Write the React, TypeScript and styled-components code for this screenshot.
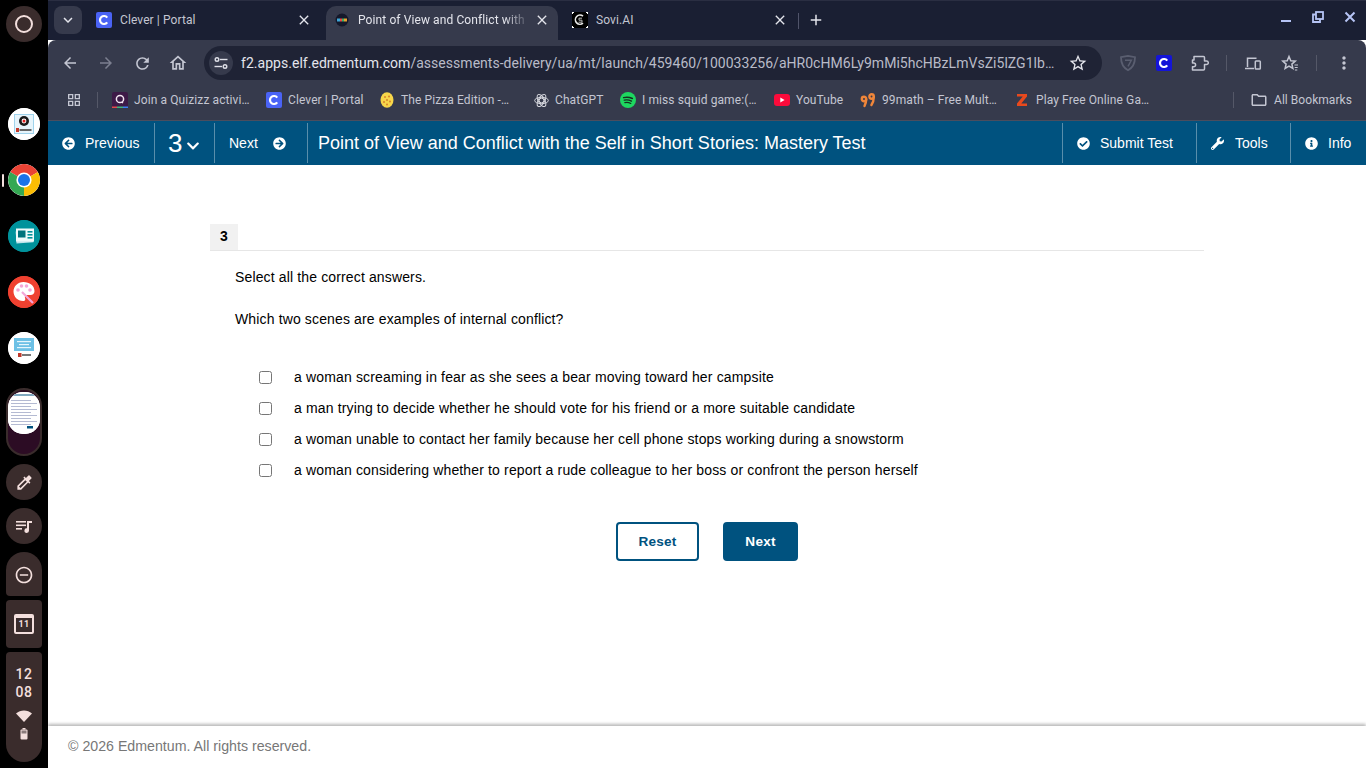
import React from "react";
import styled, { createGlobalStyle } from "styled-components";
import { FaArrowCircleLeft, FaArrowCircleRight, FaCheckCircle, FaWrench, FaInfoCircle, FaChevronDown } from "react-icons/fa";
import {
  MdArrowBack, MdArrowForward, MdRefresh, MdOutlineHome, MdClose, MdAdd, MdMoreVert,
  MdStarBorder, MdOutlineGridView, MdOutlineFolder, MdKeyboardArrowDown,
  MdColorize, MdOutlineDoNotDisturbOn,
} from "react-icons/md";

const Global = createGlobalStyle`
  html, body { margin: 0; padding: 0; height: 100%; overflow: hidden; background: #000; }
  #root { height: 100%; }
  * { box-sizing: border-box; }
`;

const Screen = styled.div`display: flex; width: 1366px; height: 768px; background: #000;`;

/* ---------- Shelf ---------- */
const Shelf = styled.aside`
  width: 48px; flex: none; background: #000; display: flex; flex-direction: column; align-items: center;
  padding-top: 6px; position: relative;
`;
const Launcher = styled.div`
  width: 36px; height: 36px; border-radius: 50%; background: #3a2c2c; display: flex; align-items: center; justify-content: center;
  margin-bottom: 66px;
  &::after { content: ""; width: 14px; height: 14px; border-radius: 50%; border: 2px solid #f3dfdd; }
`;
const AppDot = styled.div<{ $bg: string }>`
  width: 32px; height: 32px; border-radius: 50%; background: ${(p) => p.$bg}; margin-bottom: 24px; overflow: hidden;
  display: flex; align-items: center; justify-content: center; flex: none;
`;
const ActiveMark = styled.span`
  position: absolute; left: 2px; top: 174px; width: 2px; height: 13px; background: #f3dfdd; border-radius: 1px;
`;
const WindowStack = styled.div`
  width: 36px; height: 68px; border-radius: 18px; border: 2px solid #3a2c2c; background: #2c0c24; margin-bottom: 8px;
  overflow: hidden; flex: none; padding-top: 2px;
`;
const Thumb = styled.div`
  width: 32px; height: 42px; background: #fff; border-radius: 15px; overflow: hidden;
`;
const ToolCircle = styled.div`
  width: 36px; height: 36px; border-radius: 50%; background: #3a2c2c; color: #f3dfdd; display: flex; align-items: center; justify-content: center;
  margin-bottom: 8px; flex: none;
`;
const DndPill = styled.div`
  width: 36px; height: 44px; background: #3a2c2c; border-radius: 18px 18px 4px 4px; color: #f3dfdd; display: flex; align-items: center; justify-content: center;
  margin-bottom: 4px; flex: none; padding-top: 2px;
`;
const CalPill = styled.div`
  width: 36px; height: 48px; background: #3a2c2c; border-radius: 4px; display: flex; align-items: center; justify-content: center;
  margin-bottom: 4px; flex: none;
`;
const CalFace = styled.div`
  width: 20px; height: 20px; border: 2px solid #f3dfdd; border-top-width: 4px; border-radius: 2px; color: #f3dfdd;
  font: 700 9px/13px Roboto, sans-serif; text-align: center; letter-spacing: 0.3px;
`;
const StatusPill = styled.div`
  width: 36px; height: 110px; background: #3a2c2c; border-radius: 4px 4px 18px 18px; color: #f3dfdd; display: flex; flex-direction: column;
  align-items: center; padding-top: 13px; flex: none;
`;
const Clock = styled.div`font: 500 14px/18px Roboto, sans-serif; text-align: center; letter-spacing: 0.5px; color: #f3dfdd; margin-bottom: 9px;`;
const BatterySlot = styled.span`display: flex; margin-top: 6px;`;

/* ---------- Browser ---------- */
const Browser = styled.div`flex: 1; min-width: 0; display: flex; flex-direction: column; background: #fff;`;
const TabStrip = styled.div`
  height: 40px; background: #1a1f33; border-top: 1px solid #2a2e42; display: flex; align-items: flex-start; padding: 5px 0 0 6px; flex: none; position: relative;
`;
const TabSearch = styled.div`
  width: 28px; height: 28px; border-radius: 8px; background: #363a4c; color: #e4e5ec; display: flex; align-items: center; justify-content: center;
  margin-right: 6px; flex: none;
`;
const Tab = styled.div<{ $active?: boolean; $w: number }>`
  width: ${(p) => p.$w}px; height: 34px; display: flex; align-items: center; padding: 0 8px 6px 8px;
  border-radius: 10px 10px 0 0; background: ${(p) => (p.$active ? "#363a4c" : "transparent")};
  color: ${(p) => (p.$active ? "#e4e5ec" : "#c4c6d2")}; font: 12px Roboto, sans-serif; flex: none; position: relative;
`;
const TabFav = styled.span`width: 16px; height: 16px; margin-right: 8px; flex: none; display: flex;`;
const TabTitle = styled.span<{ $fade?: boolean }>`
  flex: 1; min-width: 0; white-space: nowrap; letter-spacing: 0.1px;
  ${(p) => (p.$fade ? "overflow: hidden; -webkit-mask-image: linear-gradient(90deg, #000 85%, transparent 100%);" : "")}
`;
const TabClose = styled.span`color: #e4e5ec; display: flex; width: 16px; margin-left: 4px; flex: none;`;
const TabGap = styled.div<{ $w: number }>`width: ${(p) => p.$w}px; flex: none;`;
const StripDivider = styled.span`width: 1px; height: 16px; background: #50546a; margin: 7px 8px 0 2px; flex: none;`;
const PlusBtn = styled.span`color: #e4e5ec; display: flex; margin-top: 5px; flex: none;`;
const WinControls = styled.div`
  margin-left: auto; display: flex; align-items: center; height: 24px; padding-right: 8px; color: #b6c4f5; gap: 16px; margin-top: -1px;
`;
const WinBtn = styled.span`width: 16px; height: 16px; display: flex; align-items: center; justify-content: center;`;

const Toolbar = styled.div`
  height: 44px; background: #363a4c; display: flex; align-items: flex-start; padding: 6px 0 0 12px; flex: none; color: #c4c6d2; border-radius: 8px 8px 0 0;
`;
const NavIcon = styled.span<{ $dim?: boolean }>`
  width: 20px; height: 34px; margin-right: 16px; display: flex; align-items: center; justify-content: center; flex: none;
  color: ${(p) => (p.$dim ? "#7c7f90" : "#c4c6d2")};
`;
const Omnibox = styled.div`
  width: 898px; height: 34px; background: #1f2335; border-radius: 17px; display: flex; align-items: center; padding: 0 12px 0 5px; flex: none;
`;
const SiteChip = styled.span`
  width: 24px; height: 24px; border-radius: 50%; background: #363a4c; color: #dfe0e8; display: flex; align-items: center; justify-content: center; margin-right: 8px; flex: none;
`;
const Url = styled.div`flex: 1; min-width: 0; font: 14px Roboto, sans-serif; white-space: nowrap; color: #b9bbc8; letter-spacing: 0.03px;`;
const UrlHost = styled.span`color: #e4e5ec;`;
const ExtRow = styled.div`display: flex; align-items: center; height: 34px; margin-left: 8px; flex: 1;`;
const ExtIcon = styled.span<{ $w?: number; $ml?: number; $bright?: boolean }>`
  width: ${(p) => p.$w ?? 36}px; height: 20px; display: flex; align-items: center; justify-content: center; flex: none;
  margin-left: ${(p) => p.$ml ?? 0}px; color: ${(p) => (p.$bright ? "#e4e5ec" : "#c4c6d2")};
`;
const ToolSep = styled.span`width: 1px; height: 16px; background: #555868; flex: none; margin-left: 8px;`;

const BookmarkBar = styled.div`
  height: 37px; background: #363a4c; border-bottom: 1px solid #4a4d5e; display: flex; align-items: flex-start; padding: 0 0 0 18px; flex: none;
  color: #c4c6d2; font: 12px Roboto, sans-serif;
`;
const AppsIcon = styled.span`width: 16px; height: 32px; display: flex; align-items: center; justify-content: center; flex: none; margin-right: 15px; color: #c4c6d2;`;
const BmSep = styled.span<{ $mr?: number }>`width: 1px; height: 16px; background: #555868; margin: 8px ${(p) => p.$mr ?? 0}px 0 0; flex: none;`;
const Bookmark = styled.div<{ $w: number }>`
  width: ${(p) => p.$w}px; height: 32px; display: flex; align-items: center; white-space: nowrap; flex: none; letter-spacing: 0.1px;
`;
const BmFav = styled.span`width: 16px; height: 16px; display: flex; margin-right: 6px; flex: none; align-items: center; justify-content: center;`;
const AllBookmarks = styled.div`height: 32px; display: flex; align-items: center; margin-left: 16px; flex: none; gap: 6px; letter-spacing: 0.05px;`;

/* ---------- Assessment bar ---------- */
const Bar = styled.nav`
  height: 44px; background: #00527f; color: #fff; display: flex; align-items: center; flex: none;
  font: 14px "Liberation Sans", Arial, sans-serif;
`;
const BarItem = styled.div<{ $w: number }>`
  width: ${(p) => p.$w}px; height: 40px; display: flex; align-items: center; flex: none; padding-left: 14px;
  border-right: 1px solid rgba(255,255,255,0.35);
`;
const BarItemLeft = styled(BarItem)`border-left: 1px solid rgba(255,255,255,0.35); border-right: none;`;
const BarLabel = styled.span<{ $ml: number }>`margin-left: ${(p) => p.$ml}px; white-space: nowrap;`;
const QNum = styled.span`font-size: 26px; line-height: 1; margin-left: -1px;`;
const Title = styled.div`flex: 1; min-width: 0; font-size: 18px; padding-left: 10px; white-space: nowrap;`;

/* ---------- Page ---------- */
const Main = styled.main`flex: 1; min-height: 0; padding: 59px 0 0 162px; font: 14px "Liberation Sans", Arial, sans-serif; letter-spacing: 0.01em; color: #000;`;
const Question = styled.section`width: 994px;`;
const QHead = styled.div`border-bottom: 1px solid #e6e6e6; height: 27px;`;
const QBadge = styled.div`
  width: 28px; height: 26px; background: #f1f1f1; font: 700 14px/25px "Liberation Sans", Arial, sans-serif; text-align: center;
`;
const Prompt = styled.p<{ $mt: number }>`margin: ${(p) => p.$mt}px 0 0 25px; line-height: 16px;`;
const Options = styled.div`margin: 35px 0 0 49px; display: flex; flex-direction: column;`;
const Option = styled.label`height: 31px; display: flex; align-items: center;`;
const OptionText = styled.span`margin-bottom: 2px; letter-spacing: 0.15px;`;
const Check = styled.input`width: 13px; height: 13px; margin: 0 22px 0 0; flex: none;`;
const Actions = styled.div`display: flex; justify-content: center; gap: 24px; margin-top: 36px;`;
const Button = styled.button<{ $primary?: boolean }>`
  height: 39px; width: ${(p) => (p.$primary ? 75 : 83)}px; border-radius: 4px; border: 2px solid #00527f;
  background: ${(p) => (p.$primary ? "#00527f" : "#fff")}; color: ${(p) => (p.$primary ? "#fff" : "#00527f")};
  font: 700 13.6px "Liberation Sans", Arial, sans-serif; letter-spacing: 0.2px; padding: 0;
`;
const Footer = styled.footer`
  height: 42px; flex: none; background: #fff; padding: 0 0 2px 20px; display: flex; align-items: center; color: #777;
  font: 14.2px "Liberation Sans", Arial, sans-serif; box-shadow: 0 -2px 3px rgba(0,0,0,0.28); position: relative;
`;

/* ---------- Drawings ---------- */
const CleverIcon = ({ bg = "#4a63f5" }: { bg?: string }) => (
  <svg width="16" height="16" viewBox="0 0 16 16">
    <rect width="16" height="16" rx="2" fill={bg} />
    <path d="M11.2 5.6A4 4 0 1 0 11.2 10.4" fill="none" stroke="#fff" strokeWidth="2.2" />
  </svg>
);
const QuizizzIcon = () => (
  <svg width="16" height="16" viewBox="0 0 16 16">
    <rect width="16" height="16" rx="2" fill="#3d1a47" />
    <circle cx="8" cy="7" r="3.6" fill="none" stroke="#f2e6f2" strokeWidth="1.5" />
    <path d="M9.5 10l1.5 1" stroke="#f2e6f2" strokeWidth="1.5" />
    <rect y="14.5" width="5" height="1.5" fill="#e5484d" /><rect x="5" y="14.5" width="6" height="1.5" fill="#3fb67c" /><rect x="11" y="14.5" width="5" height="1.5" fill="#3b82f6" />
  </svg>
);
const PizzaIcon = () => (
  <svg width="14" height="16" viewBox="0 0 14 16">
    <ellipse cx="7" cy="8" rx="6.5" ry="7.8" fill="#f7d64a" />
    <g fill="#d9822b"><circle cx="5" cy="5" r="1" /><circle cx="9" cy="4.5" r="1" /><circle cx="7" cy="8" r="1" /><circle cx="4" cy="10" r="1" /><circle cx="10" cy="9.5" r="1" /><circle cx="7" cy="12.5" r="1" /></g>
  </svg>
);
const GptIcon = () => (
  <svg width="15" height="15" viewBox="0 0 15 15" fill="none" stroke="#d6d7de" strokeWidth="1">
    <circle cx="7.5" cy="7.5" r="2.3" />
    <ellipse cx="7.5" cy="7.5" rx="6.8" ry="3.2" />
    <ellipse cx="7.5" cy="7.5" rx="6.8" ry="3.2" transform="rotate(60 7.5 7.5)" />
    <ellipse cx="7.5" cy="7.5" rx="6.8" ry="3.2" transform="rotate(120 7.5 7.5)" />
  </svg>
);
const SpotifyIcon = () => (
  <svg width="16" height="16" viewBox="0 0 16 16">
    <circle cx="8" cy="8" r="8" fill="#1ed760" />
    <g fill="none" stroke="#14301f" strokeLinecap="round">
      <path d="M3.6 5.6c3-.8 6-.5 8.8.9" strokeWidth="1.5" /><path d="M4.2 8.2c2.6-.6 5-.3 7.3.9" strokeWidth="1.3" /><path d="M4.8 10.6c2.1-.5 4.2-.2 6 .8" strokeWidth="1.1" />
    </g>
  </svg>
);
const YouTubeIcon = () => (
  <svg width="16" height="12" viewBox="0 0 16 12">
    <rect width="16" height="12" rx="3" fill="#fb0b3b" /><path d="M6.3 3.4v5.2L10.6 6z" fill="#fff" />
  </svg>
);
const MathIcon = () => (
  <svg width="16" height="16" viewBox="0 0 16 16" fill="none" stroke="#f0863a" strokeWidth="2.4" strokeLinecap="round">
    <circle cx="4" cy="7" r="2.2" /><path d="M6.2 7.5C6.2 10 5.5 12 4.5 14" />
    <circle cx="11.6" cy="4.5" r="2.2" /><path d="M13.8 5c0 3-1 6-2.4 8" />
  </svg>
);
const ZIcon = () => (
  <svg width="10" height="12" viewBox="0 0 10 12"><path d="M0 0h10v2.6L4.3 9.4H10V12H0V9.4L5.7 2.6H0z" fill="#e8491d" /></svg>
);
const EdmIcon = () => (
  <svg width="16" height="16" viewBox="0 0 16 16">
    <circle cx="8" cy="8" r="6.5" fill="#15182a" />
    <rect x="3" y="6.5" width="3" height="3" fill="#3ea6d6" /><rect x="6" y="6.5" width="2" height="3" fill="#e5484d" /><rect x="8" y="6.5" width="2" height="3" fill="#38b26a" /><rect x="10" y="6.5" width="3" height="3" fill="#e8a030" />
  </svg>
);
const SoviIcon = () => (
  <svg width="16" height="16" viewBox="0 0 16 16">
    <rect width="16" height="16" fill="#000" />
    <path d="M11 4.2A4.6 4.6 0 1 0 11 11.2" fill="none" stroke="#e8e8e8" strokeWidth="1.6" />
    <path d="M10 6.2H7v2h3v2H6.5" fill="none" stroke="#bbb" strokeWidth="1" />
    <path d="M0 0h2v1H1v1H0zM14 0h2v2h-1V1h-1zM0 14h1v1h1v1H0zM15 14h1v2h-2v-1h1z" fill="#fff" />
  </svg>
);
const TuneIcon = () => (
  <svg width="16" height="16" viewBox="0 0 16 16" fill="none" stroke="currentColor" strokeWidth="1.4">
    <circle cx="4" cy="4.5" r="1.8" /><path d="M7 4.5h7.5" /><path d="M1.5 11.5H9" /><circle cx="12" cy="11.5" r="1.8" />
  </svg>
);
const PuzzleIcon = () => (
  <svg width="18" height="18" viewBox="0 0 18 18" fill="none" stroke="#c4c6d2" strokeWidth="1.5" strokeLinejoin="round">
    <path d="M3 2.5h9.5a1 1 0 0 1 1 1V7h2a1.8 1.8 0 0 1 0 3.6h-2V15a1 1 0 0 1-1 1H1.5v-3.2h1.2a1.9 1.9 0 0 0 0-3.8H1.5V6H3z" />
  </svg>
);
const ShieldIcon = () => (
  <svg width="18" height="18" viewBox="0 0 18 18" fill="none" stroke="#5a5e70" strokeWidth="1.8">
    <path d="M2 3.2l7-1.4 7 1.4c0 6-1.5 10-7 13-5.5-3-7-7-7-13z" /><path d="M6 6.2h6.4L9 12.4" strokeWidth="1.4" />
  </svg>
);
const RestoreIcon = () => (
  <svg width="12" height="12" viewBox="0 0 12 12" fill="none" stroke="currentColor" strokeWidth="1.8">
    <rect x="4" y="1" width="7" height="7" /><path d="M4 3.5H1V11h7V8" />
  </svg>
);
const MinIcon = () => (<svg width="12" height="12" viewBox="0 0 12 12"><rect x="1" y="9" width="10" height="2" fill="currentColor" /></svg>);
const CloseIcon = () => (<svg width="12" height="12" viewBox="0 0 12 12" stroke="currentColor" strokeWidth="2"><path d="M1.5 1.5l9 9M10.5 1.5l-9 9" /></svg>);
const StarListIcon = () => (
  <svg width="18" height="18" viewBox="0 0 18 18" fill="none" stroke="#c4c6d2" strokeWidth="1.5">
    <path d="M8 2.5l1.8 4.2 4.5.4-3.4 3 1 4.4L8 12.2l-3.9 2.3 1-4.4-3.4-3 4.5-.4z" />
    <path d="M13.5 11h3.5M13.7 13.5h3M13.9 16h2.4" strokeWidth="1.2" />
  </svg>
);
const DevicesIcon = () => (
  <svg width="18" height="18" viewBox="0 0 18 18" fill="none" stroke="#c4c6d2" strokeWidth="1.5">
    <path d="M3.5 13V4.2h9" /><path d="M1 14.5h9" /><rect x="11.3" y="7" width="5" height="8" rx=".8" />
  </svg>
);
const PlaylistIcon = () => (
  <svg width="18" height="18" viewBox="0 0 18 18" fill="#f3dfdd">
    <rect x="1" y="4" width="10" height="1.6" /><rect x="1" y="7.5" width="10" height="1.6" /><rect x="1" y="11" width="6" height="1.6" />
    <path d="M12 4h5v2h-3v7.5a2.3 2.3 0 1 1-2-2.2z" />
  </svg>
);
const WifiIcon = () => (<svg width="16" height="12" viewBox="0 0 16 12"><path d="M0 3.6C4.5-.6 11.5-.6 16 3.6L8 12z" fill="#f3dfdd" /></svg>);
const BatteryIcon = () => (
  <svg width="8" height="12" viewBox="0 0 8 12">
    <rect x="2.5" width="3" height="1.5" fill="#f3dfdd" />
    <rect x=".5" y="1.5" width="7" height="10" rx="1" fill="#f3dfdd" />
    <rect x="1.5" y="2.5" width="5" height="3" fill="#8a7b7b" />
  </svg>
);
const CamIcon = () => (
  <svg width="32" height="32" viewBox="0 0 32 32">
    <circle cx="16" cy="16" r="16" fill="#fff" />
    <rect x="6.5" y="6.5" width="19" height="19" fill="#e6f4fb" stroke="#9fd3ec" />
    <circle cx="16" cy="13" r="5" fill="#1a1a1a" /><circle cx="16" cy="13" r="2.4" fill="#fff" /><circle cx="16" cy="13" r="1.5" fill="#e02020" />
    <rect x="8" y="20" width="3" height="4" fill="#c0392b" /><rect x="11.5" y="21" width="12" height="2" fill="#666" />
  </svg>
);
const ChromeLogo = () => (
  <svg width="32" height="32" viewBox="0 0 32 32">
    <path d="M16 16L2.2 8A16 16 0 0 1 30 8z" fill="#ea4335" />
    <path d="M16 16L30 8A16 16 0 0 1 16 32z" fill="#fbbc04" />
    <path d="M16 16L16 32A16 16 0 0 1 2.2 8z" fill="#34a853" />
    <circle cx="16" cy="16" r="7.6" fill="#fff" /><circle cx="16" cy="16" r="6" fill="#1a73e8" />
  </svg>
);
const CardsIcon = () => (
  <svg width="32" height="32" viewBox="0 0 32 32">
    <circle cx="16" cy="16" r="16" fill="#00929b" />
    <rect x="8" y="11" width="17" height="12" fill="#bfe3ea" transform="rotate(-4 16 16)" />
    <rect x="8" y="8.5" width="18" height="13" fill="#eef9fa" />
    <rect x="10" y="10.5" width="7.5" height="7" fill="#00727c" />
    <rect x="19.5" y="11" width="5" height="1.6" fill="#00929b" /><rect x="19.5" y="14" width="5" height="1.6" fill="#00929b" /><rect x="19.5" y="17" width="5" height="1.6" fill="#00929b" />
  </svg>
);
const PaletteIcon = () => (
  <svg width="32" height="32" viewBox="0 0 32 32">
    <circle cx="16" cy="16" r="16" fill="#ef4130" />
    <path d="M15.5 6C9.5 6 5.5 10.5 5.5 15.5S9.5 25 15 25c2.5 0 2.6-1.6 2-3-.6-1.6.6-3 2.2-3h3.4c2.2 0 3.9-1.6 3.9-3.8C26.5 9.5 21.5 6 15.5 6z" fill="#fff" />
    <g fill="#f4a6d8"><circle cx="10" cy="14" r="1.8" /><circle cx="13.5" cy="10" r="1.8" /><circle cx="18.5" cy="10" r="1.8" /><circle cx="22" cy="14" r="1.8" /></g>
    <path d="M14 16l11 11" stroke="#f4a6d8" strokeWidth="2.2" />
  </svg>
);
const LearnIcon = () => (
  <svg width="32" height="32" viewBox="0 0 32 32">
    <circle cx="16" cy="16" r="16" fill="#fff" />
    <rect x="6" y="6" width="20" height="13" fill="#6cc0e5" />
    <g fill="#e6f6fc"><rect x="9" y="9" width="14" height="1.2" /><rect x="11" y="12" width="10" height="1.2" /><rect x="9" y="15" width="14" height="1.2" /></g>
    <rect x="10" y="21" width="3.5" height="4" fill="#c0392b" /><rect x="14" y="22" width="9" height="2" fill="#777" />
  </svg>
);
const PageThumb = () => (
  <svg width="32" height="42" viewBox="0 0 32 42">
    <rect width="32" height="42" fill="#fff" />
    <rect width="32" height="2" y="2" fill="#7fa8bf" />
    <g fill="#b4bad2">{[8, 11, 14, 17, 20, 23, 26, 29, 32].map((y) => (<rect key={y} x="3" y={y} width={y % 2 ? 26 : 20} height="1" />))}</g>
    <rect x="19" y="34" width="6" height="2.5" fill="#00527f" />
  </svg>
);

const links: { icon: React.ReactNode; label: string; w: number }[] = [
  { icon: <QuizizzIcon />, label: "Join a Quizizz activi…", w: 154 },
  { icon: <CleverIcon />, label: "Clever | Portal", w: 113 },
  { icon: <PizzaIcon />, label: "The Pizza Edition -…", w: 154 },
  { icon: <GptIcon />, label: "ChatGPT", w: 87 },
  { icon: <SpotifyIcon />, label: "I miss squid game:(…", w: 154 },
  { icon: <YouTubeIcon />, label: "YouTube", w: 86 },
  { icon: <MathIcon />, label: "99math – Free Mult…", w: 154 },
  { icon: <ZIcon />, label: "Play Free Online Ga…", w: 219 },
];

const options = [
  "a woman screaming in fear as she sees a bear moving toward her campsite",
  "a man trying to decide whether he should vote for his friend or a more suitable candidate",
  "a woman unable to contact her family because her cell phone stops working during a snowstorm",
  "a woman considering whether to report a rude colleague to her boss or confront the person herself",
];

export default function App() {
  return (
    <Screen>
      <Global />
      <Shelf>
        <Launcher />
        <ActiveMark />
        <AppDot $bg="#fff"><CamIcon /></AppDot>
        <AppDot $bg="#fff"><ChromeLogo /></AppDot>
        <AppDot $bg="#00929b"><CardsIcon /></AppDot>
        <AppDot $bg="#ef4130"><PaletteIcon /></AppDot>
        <AppDot $bg="#fff"><LearnIcon /></AppDot>
        <WindowStack><Thumb><PageThumb /></Thumb></WindowStack>
        <ToolCircle><MdColorize size={19} /></ToolCircle>
        <ToolCircle><PlaylistIcon /></ToolCircle>
        <DndPill><MdOutlineDoNotDisturbOn size={20} /></DndPill>
        <CalPill><CalFace>11</CalFace></CalPill>
        <StatusPill>
          <Clock>12<br />08</Clock>
          <WifiIcon />
          <BatterySlot><BatteryIcon /></BatterySlot>
        </StatusPill>
      </Shelf>

      <Browser>
        <TabStrip>
          <TabSearch><MdKeyboardArrowDown size={18} /></TabSearch>
          <Tab $w={232}><TabFav><CleverIcon /></TabFav><TabTitle>Clever | Portal</TabTitle><TabClose><MdClose size={16} /></TabClose></Tab>
          <TabGap $w={6} />
          <Tab $active $w={232}><TabFav><EdmIcon /></TabFav><TabTitle $fade>Point of View and Conflict with</TabTitle><TabClose><MdClose size={16} /></TabClose></Tab>
          <TabGap $w={6} />
          <Tab $w={232}><TabFav><SoviIcon /></TabFav><TabTitle>Sovi.AI</TabTitle><TabClose><MdClose size={16} /></TabClose></Tab>
          <StripDivider />
          <PlusBtn><MdAdd size={18} /></PlusBtn>
          <WinControls>
            <WinBtn><MinIcon /></WinBtn>
            <WinBtn><RestoreIcon /></WinBtn>
            <WinBtn><CloseIcon /></WinBtn>
          </WinControls>
        </TabStrip>

        <Toolbar>
          <NavIcon><MdArrowBack size={18} /></NavIcon>
          <NavIcon $dim><MdArrowForward size={18} /></NavIcon>
          <NavIcon><MdRefresh size={19} /></NavIcon>
          <NavIcon><MdOutlineHome size={20} /></NavIcon>
          <Omnibox>
            <SiteChip><TuneIcon /></SiteChip>
            <Url><UrlHost>f2.apps.elf.edmentum.com</UrlHost>/assessments-delivery/ua/mt/launch/459460/100033256/aHR0cHM6Ly9mMi5hcHBzLmVsZi5lZG1lb…</Url>
            <ExtIcon $w={24} $ml={8} $bright><MdStarBorder size={20} /></ExtIcon>
          </Omnibox>
          <ExtRow>
            <ExtIcon><ShieldIcon /></ExtIcon>
            <ExtIcon><CleverIcon bg="#1414d8" /></ExtIcon>
            <ExtIcon><PuzzleIcon /></ExtIcon>
            <ToolSep />
            <ExtIcon $ml={8}><DevicesIcon /></ExtIcon>
            <ExtIcon $ml={1}><StarListIcon /></ExtIcon>
            <ToolSep />
            <ExtIcon $w={54}><MdMoreVert size={20} /></ExtIcon>
          </ExtRow>
        </Toolbar>

        <BookmarkBar>
          <AppsIcon><MdOutlineGridView size={20} /></AppsIcon>
          <BmSep $mr={14} />
          {links.map(({ icon, label, w }) => (
            <Bookmark key={label} $w={w}><BmFav>{icon}</BmFav>{label}</Bookmark>
          ))}
          <BmSep />
          <AllBookmarks><MdOutlineFolder size={18} />All Bookmarks</AllBookmarks>
        </BookmarkBar>

        <Bar>
          <BarItem $w={107}><FaArrowCircleLeft size={13} /><BarLabel $ml={10}>Previous</BarLabel></BarItem>
          <BarItem $w={60}><QNum>3</QNum><FaChevronDown size={14} style={{ marginLeft: 4, marginTop: 5 }} /></BarItem>
          <BarItem $w={93}><BarLabel $ml={0}>Next</BarLabel><FaArrowCircleRight size={13} style={{ marginLeft: 15 }} /></BarItem>
          <Title>Point of View and Conflict with the Self in Short Stories: Mastery Test</Title>
          <BarItemLeft $w={134}><FaCheckCircle size={13} /><BarLabel $ml={10}>Submit Test</BarLabel></BarItemLeft>
          <BarItemLeft $w={94}><FaWrench size={13} /><BarLabel $ml={11}>Tools</BarLabel></BarItemLeft>
          <BarItemLeft $w={76}><FaInfoCircle size={13} /><BarLabel $ml={10}>Info</BarLabel></BarItemLeft>
        </Bar>

        <Main>
          <Question>
            <QHead><QBadge>3</QBadge></QHead>
            <Prompt $mt={18}>Select all the correct answers.</Prompt>
            <Prompt $mt={26}>Which two scenes are examples of internal conflict?</Prompt>
            <Options>
              {options.map((o) => (
                <Option key={o}><Check type="checkbox" readOnly /><OptionText>{o}</OptionText></Option>
              ))}
            </Options>
            <Actions>
              <Button>Reset</Button>
              <Button $primary>Next</Button>
            </Actions>
          </Question>
        </Main>

        <Footer>© 2026 Edmentum. All rights reserved.</Footer>
      </Browser>
    </Screen>
  );
}
